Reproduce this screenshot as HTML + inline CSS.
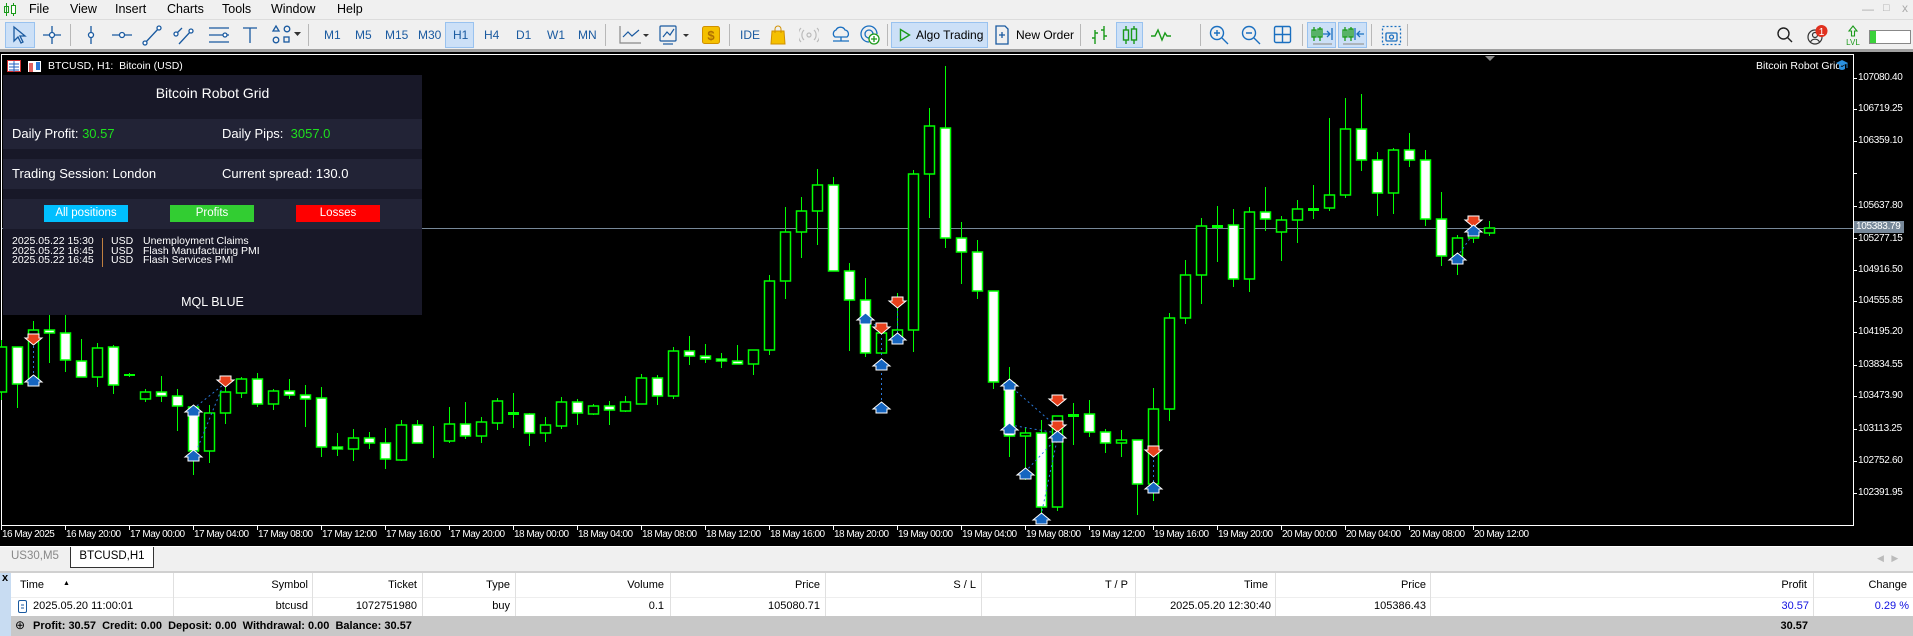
<!DOCTYPE html>
<html><head><meta charset="utf-8">
<style>
*{margin:0;padding:0;box-sizing:border-box}
body{width:1913px;height:636px;overflow:hidden;background:#f0f0f0;font-family:"Liberation Sans",sans-serif;position:relative}
.a{position:absolute;white-space:nowrap}
.menu{font-size:12.5px;color:#000;top:2px}
.tf{font-size:12px;color:#1a5aa0;top:28px}
.sep{position:absolute;top:24px;width:1px;height:22px;background:#b8b8b8}
.sel{position:absolute;background:#cce0f7;border:1px solid #99c2ef}
.tl{font-size:10px;color:#fff;top:529px;letter-spacing:-0.5px}
.pl{font-size:10px;color:#fff;left:1858px;letter-spacing:-0.3px}
.th{font-size:11px;color:#000;top:579px}
.td{font-size:11px;color:#000;top:600px}
.vs{position:absolute;top:573px;width:1px;height:43px;background:#e0e0e0}
.pr{font-size:13px;color:#fff}
.nw{font-size:10.5px;color:#fff}
</style></head><body>

<!-- menu bar -->
<svg class="a" style="left:3px;top:2px" width="14" height="15" viewBox="0 0 14 15"><line x1="3.5" y1="1" x2="3.5" y2="14" stroke="#1a9a1a"/><rect x="1.5" y="4.5" width="4" height="6" fill="none" stroke="#1a9a1a"/><line x1="10.5" y1="1" x2="10.5" y2="14" stroke="#1a9a1a"/><rect x="8.5" y="3.5" width="4" height="8" fill="#fff" stroke="#1a9a1a"/></svg>
<div class="a menu" style="left:29px">File</div>
<div class="a menu" style="left:70px">View</div>
<div class="a menu" style="left:115px">Insert</div>
<div class="a menu" style="left:167px">Charts</div>
<div class="a menu" style="left:222px">Tools</div>
<div class="a menu" style="left:271px">Window</div>
<div class="a menu" style="left:337px">Help</div>
<div class="a" style="left:1862px;top:2px;font-size:12px;color:#aaa">&#8212;</div>
<div class="a" style="left:1883px;top:2px;font-size:11px;color:#aaa">&#9633;</div>
<div class="a" style="left:1902px;top:1px;font-size:12px;color:#aaa">x</div>
<div class="a" style="left:0;top:19px;width:1913px;height:1px;background:#dcdcdc"></div>

<!-- toolbar -->
<div class="sel" style="left:5px;top:22px;width:30px;height:26px"></div>
<svg class="a" style="left:0;top:20px" width="320" height="30" viewBox="0 0 320 30" fill="none" stroke="#1a5aa0" stroke-width="1.3">
<path d="M14 7 L14 21 L18 17 L21 23 L23 22 L20 16 L25 16 Z"/>
<path d="M52 6V24M43 15H61"/><circle cx="52" cy="15" r="2.5" fill="#fff"/>
<path d="M91 6V24"/><circle cx="91" cy="15" r="2.5" fill="#fff"/>
<path d="M112 15H132"/><circle cx="122" cy="15" r="2.5" fill="#fff"/>
<path d="M145 23L159 8"/><circle cx="145" cy="23" r="2" fill="#fff"/><circle cx="159" cy="8" r="2" fill="#fff"/>
<path d="M176 14L182 8M179 24L191 11"/><circle cx="176" cy="14" r="2" fill="#fff"/><circle cx="191" cy="11" r="2" fill="#fff"/>
<path d="M209 8H229M209 15H229M209 22H229"/><circle cx="225" cy="15" r="2" fill="#fff"/>
<path d="M243 8H257M250 8V23"/>
<path d="M276 6L279 11H273Z"/><circle cx="287" cy="9" r="2.8"/><circle cx="276" cy="20" r="2.8"/><rect x="284" y="17" width="5" height="5"/>
</svg>
<svg class="a" style="left:294px;top:32px" width="8" height="5"><path d="M0 0H7L3.5 4Z" fill="#333"/></svg>
<div class="sep" style="left:70px"></div>
<div class="sep" style="left:308px"></div>
<div class="sel" style="left:445px;top:22px;width:29px;height:26px"></div>
<div class="a tf" style="left:324px">M1</div>
<div class="a tf" style="left:355px">M5</div>
<div class="a tf" style="left:385px">M15</div>
<div class="a tf" style="left:418px">M30</div>
<div class="a tf" style="left:453px">H1</div>
<div class="a tf" style="left:484px">H4</div>
<div class="a tf" style="left:516px">D1</div>
<div class="a tf" style="left:547px">W1</div>
<div class="a tf" style="left:578px">MN</div>
<div class="sep" style="left:605px"></div>
<svg class="a" style="left:617px;top:22px" width="100" height="26" viewBox="0 0 100 26" fill="none" stroke="#1a5aa0" stroke-width="1.2">
<path d="M3 4V21H24" stroke="#888"/><path d="M6 15L11 10L15 14L22 8"/>
<path d="M26 12H32L29 15Z" fill="#333" stroke="none"/>
<rect x="43" y="4" width="16" height="15" rx="1"/><path d="M46 15L50 10L53 13L57 7"/><path d="M46 22H56" />
<path d="M66 12H72L69 15Z" fill="#333" stroke="none"/>
</svg>
<svg class="a" style="left:702px;top:26px" width="18" height="18"><rect x="0.5" y="0.5" width="17" height="17" rx="2" fill="#f5c000" stroke="#d09000"/><text x="9" y="14" font-size="13" font-family="Liberation Sans" text-anchor="middle" fill="#b07000" font-weight="bold">$</text></svg>
<div class="sep" style="left:729px"></div>
<div class="a tf" style="left:740px">IDE</div>
<svg class="a" style="left:770px;top:25px" width="16" height="20"><path d="M2 6H14L15 19H1Z" fill="#f5c000" stroke="#d09000"/><path d="M5 8V4a3 3 0 0 1 6 0V8" fill="none" stroke="#d09000"/></svg>
<svg class="a" style="left:799px;top:27px" width="20" height="16" fill="none" stroke="#bbb" stroke-width="1.2"><circle cx="10" cy="8" r="2"/><path d="M5 3a7 7 0 0 0 0 10M15 3a7 7 0 0 1 0 10M2 1a10 10 0 0 0 0 14M18 1a10 10 0 0 1 0 14"/></svg>
<svg class="a" style="left:830px;top:26px" width="22" height="18" fill="none" stroke="#1a6fc0" stroke-width="1.3"><path d="M5 11a4 4 0 0 1 1-7a5 5 0 0 1 9 0a4 4 0 0 1 2 7Z"/><path d="M11 11V15M3 15H19"/></svg>
<svg class="a" style="left:860px;top:25px" width="20" height="20" fill="none" stroke="#1a6fc0" stroke-width="1.3"><path d="M9 17a8 8 0 1 1 8-8M9 13a4 4 0 1 1 4-4"/><circle cx="14" cy="14" r="5" fill="#fff" stroke="#1a9a1a"/><path d="M14 11V17M11 14H17" stroke="#1a9a1a"/></svg>
<div class="sep" style="left:887px"></div>
<div class="sel" style="left:891px;top:22px;width:97px;height:26px"></div>
<svg class="a" style="left:899px;top:28px" width="12" height="14"><path d="M1.5 1.5L10.5 7L1.5 12.5Z" fill="none" stroke="#1a9a1a" stroke-width="1.4"/></svg>
<div class="a" style="left:916px;top:28px;font-size:12px;color:#000">Algo Trading</div>
<svg class="a" style="left:994px;top:25px" width="16" height="20" fill="none" stroke="#1a5aa0" stroke-width="1.3"><path d="M2 1H11L14 4V19H2Z"/><path d="M8 7V13M5 10H11"/></svg>
<div class="a" style="left:1016px;top:28px;font-size:12px;color:#000">New Order</div>
<div class="sep" style="left:1080px"></div>
<svg class="a" style="left:1090px;top:24px" width="20" height="22" stroke="#1a9a1a" stroke-width="1.4" fill="none"><path d="M5 6V20M2 14H5M5 9H8M14 2V16M11 6H14M14 12H17"/></svg>
<div class="sel" style="left:1116px;top:22px;width:27px;height:26px"></div>
<svg class="a" style="left:1119px;top:24px" width="22" height="22" stroke="#1a9a1a" stroke-width="1.4" fill="none"><path d="M7 2V20M15 2V20"/><rect x="4.5" y="6" width="5" height="10" fill="#cce0f7"/><rect x="12.5" y="5" width="5" height="11" fill="#cce0f7"/></svg>
<svg class="a" style="left:1150px;top:26px" width="22" height="18" stroke="#1a9a1a" stroke-width="1.4" fill="none"><path d="M1 10H5L8 4L12 14L15 7L17 10H21"/></svg>
<div class="sep" style="left:1200px"></div>
<svg class="a" style="left:1208px;top:24px" width="22" height="22" stroke="#1a6fc0" stroke-width="1.4" fill="none"><circle cx="9" cy="9" r="6.5"/><path d="M14 14L20 20M6 9H12M9 6V12"/></svg>
<svg class="a" style="left:1240px;top:24px" width="22" height="22" stroke="#1a6fc0" stroke-width="1.4" fill="none"><circle cx="9" cy="9" r="6.5"/><path d="M14 14L20 20M6 9H12"/></svg>
<svg class="a" style="left:1273px;top:25px" width="20" height="20" stroke="#1a6fc0" stroke-width="1.4" fill="none"><rect x="1.5" y="1.5" width="16" height="16" rx="1.5"/><path d="M9.5 1.5V17.5M1.5 9.5H17.5"/></svg>
<div class="sep" style="left:1302px"></div>
<div class="sel" style="left:1307px;top:22px;width:29px;height:26px"></div>
<div class="sel" style="left:1338px;top:22px;width:29px;height:26px"></div>
<svg class="a" style="left:1310px;top:24px" width="56" height="22" stroke-width="1.3" fill="none"><path d="M4 3V17M10 3V17" stroke="#1a9a1a"/><rect x="2" y="6" width="4" height="7" stroke="#1a9a1a"/><rect x="8" y="5" width="4" height="8" stroke="#1a9a1a"/><path d="M13 10H20M17 7L20 10L17 13M22 4V16" stroke="#1a6fc0"/><path d="M3 20H22" stroke="#999"/>
<path d="M35 3V17M41 3V17" stroke="#1a9a1a"/><rect x="33" y="6" width="4" height="7" stroke="#1a9a1a"/><rect x="39" y="5" width="4" height="8" stroke="#1a9a1a"/><path d="M45 4V16M47 10H54M50 7L47 10L50 13" stroke="#1a6fc0"/><path d="M33 20H54" stroke="#999"/></svg>
<div class="sep" style="left:1371px"></div>
<svg class="a" style="left:1381px;top:25px" width="22" height="22" stroke="#1a6fc0" stroke-width="1.3" fill="none"><rect x="1.5" y="1.5" width="18" height="18" stroke-dasharray="2,2"/><rect x="5" y="8" width="11" height="8" rx="1"/><circle cx="10.5" cy="12" r="2"/></svg>
<div class="sep" style="left:1407px"></div>
<svg class="a" style="left:1776px;top:26px" width="18" height="18" stroke="#222" stroke-width="1.4" fill="none"><circle cx="7.5" cy="7.5" r="5.5"/><path d="M11.5 11.5L16 16"/></svg>
<svg class="a" style="left:1806px;top:24px" width="24" height="22" fill="none" stroke="#333" stroke-width="1.2"><circle cx="9" cy="13" r="7"/><circle cx="9" cy="11" r="2.5"/><path d="M4.5 18a5 5 0 0 1 9 0"/><circle cx="15.5" cy="7" r="6" fill="#e0301e" stroke="none"/><text x="15.5" y="11" font-size="10" text-anchor="middle" fill="#fff" stroke="none" font-family="Liberation Sans">1</text></svg>
<svg class="a" style="left:1844px;top:25px" width="18" height="22"><path d="M9 1L13 6H10.5V11H7.5V6H5Z" fill="none" stroke="#1a9a1a" stroke-width="1.1"/><text x="9" y="20" font-size="8" text-anchor="middle" fill="#1a9a1a" font-family="Liberation Sans">LVL</text></svg>
<div class="a" style="left:1869px;top:30px;width:42px;height:14px;background:#fff;border:1px solid #888"></div>
<div class="a" style="left:1870px;top:31px;width:6px;height:12px;background:#3bd13b"></div>
<div class="a" style="left:0;top:49px;width:1913px;height:3px;background:#a0a0a0"></div>

<!-- chart -->
<div class="a" style="left:0;top:52px;width:1913px;height:494px;background:#000"></div>
<svg class="a" style="left:0;top:0" width="1913" height="636" viewBox="0 0 1913 636">
<path d="M1.5 54.5H1853.5V525.5H1.5Z" fill="none" stroke="#fff" stroke-width="1"/>
<path d="M1485 56H1495L1490 61Z" fill="#888"/>
<line x1="2" y1="228.5" x2="1853" y2="228.5" stroke="#778899"/>
<g stroke="#fff"><path d="M1853 78.5h4M1853 109.5h4M1853 141.5h4M1853 173.5h4M1853 206.5h4M1853 238.5h4M1853 270.5h4M1853 301.5h4M1853 332.5h4M1853 365.5h4M1853 396.5h4M1853 429.5h4M1853 461.5h4M1853 493.5h4"/>
<path d="M1.5 525v5M65.5 525v5M129.5 525v5M193.5 525v5M257.5 525v5M321.5 525v5M385.5 525v5M449.5 525v5M513.5 525v5M577.5 525v5M641.5 525v5M705.5 525v5M769.5 525v5M833.5 525v5M897.5 525v5M961.5 525v5M1025.5 525v5M1089.5 525v5M1153.5 525v5M1217.5 525v5M1281.5 525v5M1345.5 525v5M1409.5 525v5M1473.5 525v5"/></g>
<g stroke="#00ff00" stroke-width="1" shape-rendering="crispEdges">
<path d="M1.5 340V400M17.5 347V408M33.5 321V384M49.5 315V363M65.5 315V372M81.5 339V377M97.5 343V387M113.5 345V394M129.5 373V377M145.5 389V402M161.5 376V402M177.5 389V431M193.5 405V475M209.5 405V463M225.5 387V424M241.5 377V398M257.5 373V407M273.5 389V410M289.5 379V399M305.5 385V427M321.5 387V457M337.5 433V456M353.5 429V461M369.5 432V449M385.5 428V469M401.5 420V461M417.5 420V443M433.5 426V458M449.5 407V443M465.5 402V439M481.5 417V443M497.5 398V430M513.5 393V428M529.5 413V446M545.5 417V442M561.5 397V429M577.5 399V425M593.5 404V415M609.5 401V425M625.5 396V412M641.5 374V404M657.5 375V405M673.5 347V399M689.5 336V365M705.5 344V363M721.5 353V368M737.5 345V364M753.5 350V375M769.5 275V355M785.5 207V299M801.5 197V258M817.5 169V245M833.5 177V271M849.5 263V351M865.5 278V357M881.5 323V353M897.5 293V341M913.5 170V352M929.5 108V218M945.5 66V248M961.5 222V284M977.5 240V299M993.5 291V389M1009.5 367V457M1025.5 427V480M1041.5 420V517M1057.5 416V511M1073.5 403V445M1089.5 400V437M1105.5 429V453M1121.5 430V457M1137.5 440V515M1153.5 388V501M1169.5 313V421M1185.5 260V324M1201.5 218V304M1217.5 206V262M1233.5 209V287M1249.5 207V292M1265.5 187V231M1281.5 216V261M1297.5 200V243M1313.5 185V219M1329.5 118V211M1345.5 98V198M1361.5 94V171M1377.5 152V216M1393.5 148V214M1409.5 133V167M1425.5 150V226M1441.5 192V266M1457.5 235V275M1473.5 232V243M1489.5 221V236"/>
</g>
<g stroke="#00ff00" stroke-width="1.5">
<g fill="#000">
<rect x="-3.5" y="347" width="10" height="45"/><rect x="28.5" y="330" width="10" height="54"/><rect x="92.5" y="348" width="10" height="29"/><rect x="140.5" y="392" width="10" height="7"/><rect x="204.5" y="413" width="10" height="38"/><rect x="220.5" y="392" width="10" height="21"/><rect x="236.5" y="379" width="10" height="14"/><rect x="268.5" y="391" width="10" height="13"/><rect x="348.5" y="438" width="10" height="11"/><rect x="396.5" y="425" width="10" height="35"/><rect x="444.5" y="424" width="10" height="17"/><rect x="476.5" y="422" width="10" height="14"/><rect x="492.5" y="401" width="10" height="22"/><rect x="540.5" y="425" width="10" height="8"/><rect x="556.5" y="402" width="10" height="24"/><rect x="588.5" y="406" width="10" height="8"/><rect x="620.5" y="402" width="10" height="9"/><rect x="636.5" y="378" width="10" height="26"/><rect x="668.5" y="351" width="10" height="45"/><rect x="748.5" y="350" width="10" height="14"/><rect x="764.5" y="281" width="10" height="69"/><rect x="780.5" y="232" width="10" height="49"/><rect x="796.5" y="211" width="10" height="21"/><rect x="812.5" y="185" width="10" height="26"/><rect x="876.5" y="333" width="10" height="20"/><rect x="892.5" y="330" width="10" height="11"/><rect x="908.5" y="174" width="10" height="156"/><rect x="924.5" y="126" width="10" height="48"/><rect x="1020.5" y="433" width="10" height="3"/><rect x="1052.5" y="416" width="10" height="91"/><rect x="1116.5" y="440" width="10" height="3"/><rect x="1148.5" y="409" width="10" height="75"/><rect x="1164.5" y="318" width="10" height="91"/><rect x="1180.5" y="275" width="10" height="43"/><rect x="1196.5" y="226" width="10" height="49"/><rect x="1244.5" y="212" width="10" height="67"/><rect x="1276.5" y="220" width="10" height="12"/><rect x="1292.5" y="209" width="10" height="11"/><rect x="1324.5" y="195" width="10" height="13"/><rect x="1340.5" y="129" width="10" height="66"/><rect x="1388.5" y="150" width="10" height="43"/><rect x="1452.5" y="238" width="10" height="18"/><rect x="1468.5" y="233" width="10" height="5"/><rect x="1484.5" y="228" width="10" height="5"/>
</g>
<g fill="#fff">
<rect x="12.5" y="347" width="10" height="37"/><rect x="44.5" y="330" width="10" height="3"/><rect x="60.5" y="333" width="10" height="27"/><rect x="76.5" y="361" width="10" height="16"/><rect x="108.5" y="347" width="10" height="38"/><rect x="156.5" y="392" width="10" height="4"/><rect x="172.5" y="396" width="10" height="10"/><rect x="188.5" y="407" width="10" height="44"/><rect x="252.5" y="379" width="10" height="25"/><rect x="284.5" y="391" width="10" height="4"/><rect x="300.5" y="395" width="10" height="4"/><rect x="316.5" y="398" width="10" height="49"/><rect x="332.5" y="447" width="10" height="2"/><rect x="364.5" y="438" width="10" height="5"/><rect x="380.5" y="443" width="10" height="16"/><rect x="412.5" y="425" width="10" height="18"/><rect x="460.5" y="424" width="10" height="12"/><rect x="524.5" y="414" width="10" height="19"/><rect x="572.5" y="402" width="10" height="11"/><rect x="604.5" y="406" width="10" height="4"/><rect x="652.5" y="378" width="10" height="18"/><rect x="684.5" y="351" width="10" height="5"/><rect x="700.5" y="356" width="10" height="3"/><rect x="716.5" y="359" width="10" height="2"/><rect x="732.5" y="361" width="10" height="3"/><rect x="828.5" y="185" width="10" height="86"/><rect x="844.5" y="271" width="10" height="29"/><rect x="860.5" y="300" width="10" height="53"/><rect x="940.5" y="128" width="10" height="110"/><rect x="956.5" y="238" width="10" height="14"/><rect x="972.5" y="252" width="10" height="39"/><rect x="988.5" y="291" width="10" height="91"/><rect x="1004.5" y="383" width="10" height="53"/><rect x="1036.5" y="433" width="10" height="74"/><rect x="1084.5" y="414" width="10" height="18"/><rect x="1100.5" y="432" width="10" height="11"/><rect x="1132.5" y="440" width="10" height="44"/><rect x="1228.5" y="225" width="10" height="54"/><rect x="1260.5" y="212" width="10" height="7"/><rect x="1356.5" y="129" width="10" height="31"/><rect x="1372.5" y="160" width="10" height="33"/><rect x="1404.5" y="150" width="10" height="10"/><rect x="1420.5" y="160" width="10" height="59"/><rect x="1436.5" y="219" width="10" height="37"/>
</g>
</g>
<g fill="#00ff00"><rect x="124" y="374" width="11" height="2"/><rect x="508" y="412" width="11" height="3"/><rect x="1068" y="414" width="11" height="3"/><rect x="1212" y="225" width="11" height="3"/><rect x="1308" y="208" width="11" height="3"/></g>
<g stroke="#2a78d8" stroke-width="1" stroke-dasharray="2,3" fill="none">
<path d="M33.5 346V378M193 409L223 385M196 452L222 388M865 320L881 328M881.5 333V405M897.5 306V336M1009 385L1057 427M1010 425L1057 433M1025 472L1057 438M1041 516L1057 440M1153.5 455V485M1457 257L1473 234"/>
</g>
<g stroke="#fff" stroke-width="1">
<g fill="#e8401c">
<path d="M28 338H39V342H42L33.5 349L25 342H28Z" transform="translate(0,-4)"/>
<path d="M220 376H231V380H234L225.5 387L217 380H220Z"/>
<path d="M876 323H887V327H890L881.5 334L873 327H876Z"/>
<path d="M892 297H903V301H906L897.5 308L889 301H892Z"/>
<path d="M1052 395H1063V399H1066L1057.5 406L1049 399H1052Z"/>
<path d="M1052 421H1063V425H1066L1057.5 432L1049 425H1052Z"/>
<path d="M1148 446H1159V450H1162L1153.5 457L1145 450H1148Z"/>
<path d="M1468 216H1479V220H1482L1473.5 227L1465 220H1468Z"/>
</g>
<g fill="#1565c0">
<path d="M33.5 375L42 382H39V386H28V382H25Z"/>
<path d="M193.5 405L202 412H199V416H188V412H185Z"/>
<path d="M193.5 450L202 457H199V461H188V457H185Z"/>
<path d="M865.5 313L874 320H871V324H860V320H857Z"/>
<path d="M881.5 359L890 366H887V370H876V366H873Z"/>
<path d="M881.5 402L890 409H887V413H876V409H873Z"/>
<path d="M897.5 333L906 340H903V344H892V340H889Z"/>
<path d="M1009.5 379L1018 386H1015V390H1004V386H1001Z"/>
<path d="M1009.5 423L1018 430H1015V434H1004V430H1001Z"/>
<path d="M1025.5 468L1034 475H1031V479H1020V475H1017Z"/>
<path d="M1041.5 513L1050 520H1047V524H1036V520H1033Z"/>
<path d="M1057.5 431L1066 438H1063V442H1052V438H1049Z"/>
<path d="M1153.5 482L1162 489H1159V493H1148V489H1145Z"/>
<path d="M1457.5 253L1466 260H1463V264H1452V260H1449Z"/>
<path d="M1473.5 225L1482 232H1479V236H1468V232H1465Z"/>
</g></g>
</svg>
<!-- chart title -->
<svg class="a" style="left:7px;top:60px" width="36" height="13"><rect x="0.5" y="0.5" width="13" height="11" fill="#fff" stroke="#d03030"/><path d="M2 4H12M2 7H12M2 10H12M7 1V12" stroke="#2060c0"/><rect x="21" y="1" width="13" height="11" fill="#fff"/><rect x="22" y="3" width="4" height="9" fill="#e06060"/><rect x="29" y="2" width="4" height="8" fill="#2a78d8"/></svg>
<div class="a" style="left:48px;top:60px;font-size:10.5px;color:#fff">BTCUSD, H1:&nbsp; Bitcoin (USD)</div>
<div class="a" style="left:1756px;top:60px;font-size:10.5px;color:#fff">Bitcoin Robot Grid</div>
<svg class="a" style="left:1835px;top:58px" width="14" height="14"><path d="M1 5L7 2L13 5L7 8Z" fill="#2a90e0"/><path d="M4 7V11Q7 13 10 11V7L7 9Z" fill="#2a90e0"/><path d="M12 5V10" stroke="#2a90e0"/></svg>

<!-- price labels -->
<div class="a pl" style="top:72px">107080.40</div>
<div class="a pl" style="top:103px">106719.25</div>
<div class="a pl" style="top:135px">106359.10</div>
<div class="a pl" style="top:200px">105637.80</div>
<div class="a pl" style="top:233px">105277.15</div>
<div class="a pl" style="top:264px">104916.50</div>
<div class="a pl" style="top:295px">104555.85</div>
<div class="a pl" style="top:326px">104195.20</div>
<div class="a pl" style="top:359px">103834.55</div>
<div class="a pl" style="top:390px">103473.90</div>
<div class="a pl" style="top:423px">103113.25</div>
<div class="a pl" style="top:455px">102752.60</div>
<div class="a pl" style="top:487px">102391.95</div>
<div class="a" style="left:1854px;top:221px;width:50px;height:12px;background:#778899;color:#fff;font-size:10px;letter-spacing:-0.3px;padding-left:2px;line-height:12px">105383.79</div>

<!-- time labels -->
<div class="a tl" style="left:2px">16 May 2025</div>
<div class="a tl" style="left:66px">16 May 20:00</div>
<div class="a tl" style="left:130px">17 May 00:00</div>
<div class="a tl" style="left:194px">17 May 04:00</div>
<div class="a tl" style="left:258px">17 May 08:00</div>
<div class="a tl" style="left:322px">17 May 12:00</div>
<div class="a tl" style="left:386px">17 May 16:00</div>
<div class="a tl" style="left:450px">17 May 20:00</div>
<div class="a tl" style="left:514px">18 May 00:00</div>
<div class="a tl" style="left:578px">18 May 04:00</div>
<div class="a tl" style="left:642px">18 May 08:00</div>
<div class="a tl" style="left:706px">18 May 12:00</div>
<div class="a tl" style="left:770px">18 May 16:00</div>
<div class="a tl" style="left:834px">18 May 20:00</div>
<div class="a tl" style="left:898px">19 May 00:00</div>
<div class="a tl" style="left:962px">19 May 04:00</div>
<div class="a tl" style="left:1026px">19 May 08:00</div>
<div class="a tl" style="left:1090px">19 May 12:00</div>
<div class="a tl" style="left:1154px">19 May 16:00</div>
<div class="a tl" style="left:1218px">19 May 20:00</div>
<div class="a tl" style="left:1282px">20 May 00:00</div>
<div class="a tl" style="left:1346px">20 May 04:00</div>
<div class="a tl" style="left:1410px">20 May 08:00</div>
<div class="a tl" style="left:1474px">20 May 12:00</div>

<!-- panel -->
<div class="a" style="left:3px;top:75px;width:419px;height:240px;background:#181828"></div>
<div class="a" style="left:3px;top:119px;width:419px;height:30px;background:#222336"></div>
<div class="a" style="left:3px;top:159px;width:419px;height:30px;background:#222336"></div>
<div class="a" style="left:3px;top:199px;width:419px;height:30px;background:#222336"></div>
<div class="a pr" style="left:0;width:425px;text-align:center;top:85px;font-size:14px">Bitcoin Robot Grid</div>
<div class="a pr" style="left:12px;top:126px">Daily Profit: <span style="color:#1ee01e">30.57</span></div>
<div class="a pr" style="left:222px;top:126px">Daily Pips:&nbsp; <span style="color:#1ee01e">3057.0</span></div>
<div class="a pr" style="left:12px;top:166px">Trading Session: London</div>
<div class="a pr" style="left:222px;top:166px">Current spread: 130.0</div>
<div class="a" style="left:44px;top:205px;width:84px;height:17px;background:#00bfff;color:#fff;font-size:11.5px;text-align:center;line-height:17px">All positions</div>
<div class="a" style="left:170px;top:205px;width:84px;height:17px;background:#32cd32;color:#fff;font-size:11.5px;text-align:center;line-height:17px">Profits</div>
<div class="a" style="left:296px;top:205px;width:84px;height:17px;background:#ff0000;color:#fff;font-size:11.5px;text-align:center;line-height:17px">Losses</div>
<div class="a nw" style="left:12px;top:237px;line-height:9.7px">2025.05.22 15:30<br>2025.05.22 16:45<br>2025.05.22 16:45</div>
<div class="a" style="left:102px;top:238px;width:1px;height:29px;background:#c08040"></div>
<div class="a nw" style="left:111px;top:237px;line-height:9.7px">USD<br>USD<br>USD</div>
<div class="a nw" style="left:143px;top:237px;line-height:9.7px">Unemployment Claims<br>Flash Manufacturing PMI<br>Flash Services PMI</div>
<div class="a pr" style="left:0;width:425px;text-align:center;top:295px;font-size:12.5px">MQL BLUE</div>

<!-- tabs -->
<div class="a" style="left:0;top:546px;width:1913px;height:1px;background:#fff"></div>
<div class="a" style="left:0;top:547px;width:1913px;height:24px;background:#f0f0f0"></div>
<div class="a" style="left:11px;top:550px;font-size:11.5px;color:#888">US30,M5</div>
<div class="a" style="left:70px;top:547px;width:84px;height:21px;background:#fff;border:1px solid #333;border-top:none;font-size:11.5px;text-align:center;line-height:19px">BTCUSD,H1</div>
<div class="a" style="left:1877px;top:553px;font-size:9px;color:#bbb">&#9664;&nbsp;&nbsp;&nbsp;&#9654;</div>
<div class="a" style="left:0;top:571px;width:1913px;height:2px;background:#d0d0d0"></div>

<!-- table -->
<div class="a" style="left:11px;top:573px;width:1902px;height:43px;background:#fff"></div>
<div class="a" style="left:0;top:573px;width:11px;height:63px;background:#c8dcf2"></div>
<div class="a" style="left:2px;top:572px;font-size:11px;font-weight:bold;color:#000">x</div>
<div class="a" style="left:11px;top:597px;width:1902px;height:1px;background:#eee"></div>
<div class="vs" style="left:173px"></div><div class="vs" style="left:312px"></div><div class="vs" style="left:422px"></div><div class="vs" style="left:515px"></div><div class="vs" style="left:670px"></div><div class="vs" style="left:825px"></div><div class="vs" style="left:981px"></div><div class="vs" style="left:1135px"></div><div class="vs" style="left:1275px"></div><div class="vs" style="left:1430px"></div><div class="vs" style="left:1813px"></div>
<div class="a th" style="left:20px">Time</div>
<div class="a" style="left:63px;top:580px;font-size:7px">&#9650;</div>
<div class="a th" style="right:1605px">Symbol</div>
<div class="a th" style="right:1496px">Ticket</div>
<div class="a th" style="right:1403px">Type</div>
<div class="a th" style="right:1249px">Volume</div>
<div class="a th" style="right:1093px">Price</div>
<div class="a th" style="right:937px">S / L</div>
<div class="a th" style="right:785px">T / P</div>
<div class="a th" style="right:645px">Time</div>
<div class="a th" style="right:487px">Price</div>
<div class="a th" style="right:106px">Profit</div>
<div class="a th" style="right:6px">Change</div>
<svg class="a" style="left:18px;top:600px" width="9" height="13"><rect x="0.5" y="0.5" width="8" height="12" rx="1.5" fill="#fff" stroke="#1a5aa0"/><path d="M3 5H6M3 8H6" stroke="#1a5aa0"/></svg>
<div class="a td" style="left:33px">2025.05.20 11:00:01</div>
<div class="a td" style="right:1605px">btcusd</div>
<div class="a td" style="right:1496px">1072751980</div>
<div class="a td" style="right:1403px">buy</div>
<div class="a td" style="right:1249px">0.1</div>
<div class="a td" style="right:1093px">105080.71</div>
<div class="a td" style="right:642px">2025.05.20 12:30:40</div>
<div class="a td" style="right:487px">105386.43</div>
<div class="a td" style="right:104px;color:#1010e0">30.57</div>
<div class="a td" style="right:4px;color:#1010e0">0.29 %</div>
<div class="a" style="left:11px;top:616px;width:1902px;height:20px;background:#c8c8c8"></div>
<div class="a" style="left:15px;top:618px;font-size:12px;color:#000">&#8853;</div>
<div class="a" style="left:33px;top:620px;font-size:11px;font-weight:bold;color:#000">Profit: 30.57&nbsp; Credit: 0.00&nbsp; Deposit: 0.00&nbsp; Withdrawal: 0.00&nbsp; Balance: 30.57</div>
<div class="a" style="right:105px;top:620px;font-size:11px;font-weight:bold;color:#000">30.57</div>
</body></html>
